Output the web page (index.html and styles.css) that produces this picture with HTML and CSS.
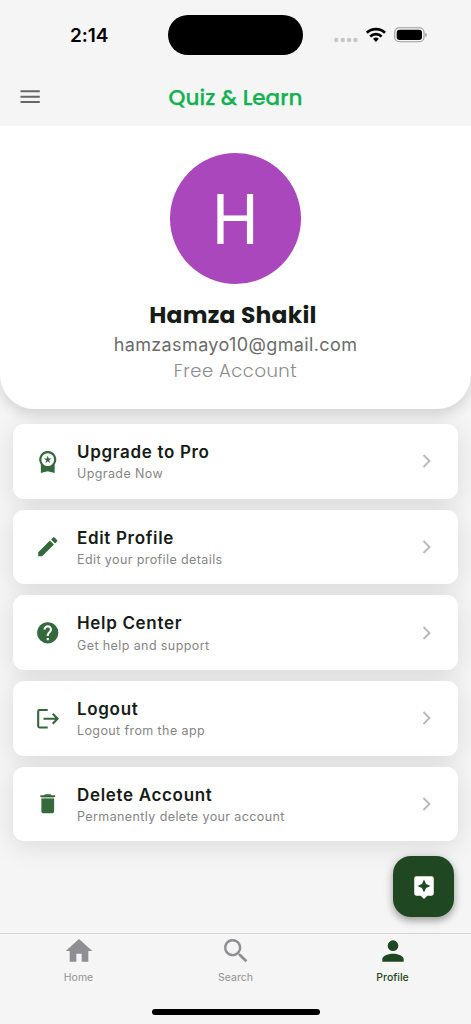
FILE: index.html
```html
<!DOCTYPE html>
<html lang="en">
<head>
<meta charset="utf-8">
<meta name="viewport" content="width=device-width, initial-scale=1">
<title>Quiz &amp; Learn</title>
<link rel="stylesheet" href="styles.css">
</head>
<body>
<div class="screen">
  <div class="status">
    <span class="time">2:14</span>
    <span class="island"></span>
    <svg class="indicators" width="96" height="20" viewBox="0 0 96 20">
      <g fill="#c6c6c6"><circle cx="4.2" cy="15" r="2.2"/><circle cx="10.7" cy="15" r="2.2"/><circle cx="17.2" cy="15" r="2.2"/><circle cx="23.4" cy="15" r="2.2"/></g>
      <g fill="none" stroke="#000" stroke-width="2.7"><path d="M34.8 7.8a13.2 13.2 0 0 1 18.2 0"/><path d="M38.2 11.4a8.3 8.3 0 0 1 11.4 0"/></g>
      <path d="M41 13.8a4.3 4.3 0 0 1 5.8 0L43.900 16.900z"/>
      <rect x="62.700" y="2.700" width="29.300" height="14" rx="4.500" fill="none" stroke="#999" stroke-width="1.100"/>
      <rect x="64.700" y="4.700" width="25.300" height="10.200" rx="2.900"/>
      <path d="M93.300 7.700c2 .7 2 3.700 0 4.400z" fill="#999"/>
    </svg>
  </div>
  <header class="topbar">
    <svg class="menu" width="20" height="14" viewBox="0 0 20 14"><path d="M.5 1.200h19.300M.5 6.700h19.300M.5 12h19.300" stroke="#666" stroke-width="1.900"/></svg>
    <h1 class="brand">Quiz &amp; Learn</h1>
  </header>
  <section class="account">
    <div class="avatar"><span>H</span></div>
    <h2 class="name">Hamza Shakil</h2>
    <p class="email">hamzasmayo10@gmail.com</p>
    <p class="plan">Free Account</p>
  </section>
  <main class="options">
    <a class="option">
      <svg class="icon" viewBox="0 0 24 24"><path fill-rule="evenodd" d="M12 1.900a8 8 0 0 0-6.500 12.700V22.500l6.500-1.600 6.500 1.600v-7.900A8 8 0 0 0 12 1.900zm0 2.100a6 6 0 1 1 0 12 6 6 0 0 1 0-12z"/><path d="m12 6.200.9 2.700h2.700l-2.200 1.700.8 2.700-2.200-1.700-2.200 1.700.8-2.700-2.200-1.700h2.700z"/></svg>
      <span class="copy"><strong>Upgrade to Pro</strong><small>Upgrade Now</small></span>
      <svg class="chevron" viewBox="0 0 10 14"><path d="m1.500 1 6 6-6 6"/></svg>
    </a>
    <a class="option">
      <svg class="icon" viewBox="0 0 24 24"><path d="M3 17.250V21h3.750L17.810 9.940l-3.750-3.750zM20.710 7.040a1 1 0 0 0 0-1.410l-2.340-2.340a1 1 0 0 0-1.410 0l-1.830 1.830 3.750 3.750z"/></svg>
      <span class="copy"><strong>Edit Profile</strong><small>Edit your profile details</small></span>
      <svg class="chevron" viewBox="0 0 10 14"><path d="m1.500 1 6 6-6 6"/></svg>
    </a>
    <a class="option">
      <svg class="icon" viewBox="0 0 24 24"><path d="M12 2a10 10 0 1 0 0 20 10 10 0 0 0 0-20zm1 17h-2v-2h2zm2.070-7.750-.9.920C13.450 12.900 13 13.500 13 15h-2v-.5c0-1.100.45-2.100 1.170-2.830l1.240-1.260A2 2 0 1 0 10 9H8a4 4 0 1 1 8 0c0 .88-.36 1.680-.93 2.250z"/></svg>
      <span class="copy"><strong>Help Center</strong><small>Get help and support</small></span>
      <svg class="chevron" viewBox="0 0 10 14"><path d="m1.500 1 6 6-6 6"/></svg>
    </a>
    <a class="option">
      <svg class="icon line" viewBox="0 0 24 24"><path d="M12 3.800H4.300q-1.300 0-1.300 1.300v13.800q0 1.300 1.300 1.300H12M8 12h13M16.700 7.400l4.500 4.600-4.500 4.600"/></svg>
      <span class="copy"><strong>Logout</strong><small>Logout from the app</small></span>
      <svg class="chevron" viewBox="0 0 10 14"><path d="m1.500 1 6 6-6 6"/></svg>
    </a>
    <a class="option">
      <svg class="icon" viewBox="0 0 24 24"><path d="M6 19c0 1.100.9 2 2 2h8c1.100 0 2-.9 2-2V7H6z"/><path d="M19 4h-3.500l-1-1h-5l-1 1H5v1.700h14z"/><path opacity=".45" d="M6 5.700h12V7H6z"/></svg>
      <span class="copy"><strong>Delete Account</strong><small>Permanently delete your account</small></span>
      <svg class="chevron" viewBox="0 0 10 14"><path d="m1.500 1 6 6-6 6"/></svg>
    </a>
  </main>
  <button class="fab" aria-label="Assistant">
    <svg width="26" height="26" viewBox="0 0 24 24"><path fill="#fff" fill-rule="evenodd" d="M19 2H5a2 2 0 0 0-2 2v14c0 1.100.9 2 2 2h4l3 3 3-3h4a2 2 0 0 0 2-2V4a2 2 0 0 0-2-2zm-5.120 10.880L12 17l-1.880-4.120L6 11l4.120-1.880L12 5l1.880 4.120L18 11z"/></svg>
  </button>
  <nav class="tabs">
    <a class="tab"><svg width="32" height="32" viewBox="0 0 24 24"><path d="M10 20v-6h4v6h5v-8h3L12 3 2 12h3v8z"/></svg><span>Home</span></a>
    <a class="tab"><svg width="32" height="32" viewBox="0 0 24 24"><path d="M15.500 14h-.79l-.28-.27A6.500 6.500 0 1 0 13.730 14.430l.27.28v.79l5 4.990L20.490 19zm-6 0.200a4.700 4.700 0 1 1 0-9.400 4.700 4.700 0 0 1 0 9.400z"/></svg><span>Search</span></a>
    <a class="tab active"><svg width="32" height="32" viewBox="0 0 24 24"><path d="M12 12a4 4 0 1 0 0-8 4 4 0 0 0 0 8zm0 2c-2.670 0-8 1.340-8 4v2h16v-2c0-2.660-5.330-4-8-4z"/></svg><span>Profile</span></a>
  </nav>
  <div class="home-bar"></div>
</div>
</body>
</html>
```
FILE: styles.css
```css
* { box-sizing: border-box; }
body { margin: 0; font-family: Inter, "Liberation Sans", sans-serif; background: #f5f5f5; }
h1, h2, p { margin: 0; }
.screen { position: relative; width: 471px; height: 1024px; display: flex; flex-direction: column; background: #f5f5f5; overflow: hidden; }

.status { height: 69px; padding-top: 15px; display: grid; grid-template-columns: 168px 135px 1fr; align-items: start; flex: none; }
.time { padding: 9px 0 0 70px; font-size: 19px; line-height: 24px; font-weight: 600; letter-spacing: -.1px; }
.island { height: 40px; border-radius: 20px; background: #000; }
.indicators { margin: 10px 0 0 29px; }

.topbar { position: relative; z-index: 1; height: 57px; display: grid; grid-template-columns: 40px 1fr 40px; align-items: center; padding: 0 20px 1px; flex: none; background: #f5f5f5; }
.menu { display: block; }
.brand { padding-top: 2px; text-align: center; white-space: nowrap; font-family: Poppins, Inter, sans-serif; font-size: 21.500px; line-height: 30px; font-weight: 500; color: #12b250; -webkit-text-stroke: .25px #12b250; }

.account { height: 283px; flex: none; padding-top: 27px; display: flex; flex-direction: column; align-items: center; background: #fff; border-radius: 0 0 34px 34px; box-shadow: 0 5px 13px rgba(0,0,0,.15); }
.avatar { width: 131px; height: 131px; padding-top: 3px; border-radius: 50%; background: #aa47bc; color: #fff; display: flex; align-items: center; justify-content: center; font: 400 71px/72px Roboto, sans-serif; }
.avatar span { transform: scaleX(.92); }
.name { margin-top: 15px; padding-right: 5px; font-family: Poppins, Inter, sans-serif; font-size: 23.400px; line-height: 32px; font-weight: 700; letter-spacing: .25px; color: #161c17; }
.email { margin-top: 1px; font-size: 18px; line-height: 26px; letter-spacing: .38px; color: #6b6b6b; }
.plan { font-family: Poppins, Inter, sans-serif; font-size: 18px; line-height: 26px; font-weight: 300; letter-spacing: .5px; color: #8c8c8c; }

.options { padding: 15px 13px 0; display: flex; flex-direction: column; gap: 11px; }
.option { height: 74.700px; flex: none; padding: 0 26px 0 21.500px; display: flex; align-items: center; background: #fff; border-radius: 11px; box-shadow: 0 5px 27px rgba(0,0,0,.11); }
.icon { width: 25.500px; height: 25.500px; flex: none; fill: #34693b; }
.line { fill: none; stroke: #34693b; stroke-width: 2; }
.copy { flex: 1; margin-left: 17px; padding-top: 2.600px; display: flex; flex-direction: column; }
.copy strong { font-size: 17px; line-height: 22px; font-weight: 600; letter-spacing: .67px; color: #161c17; }
.copy small { font-size: 12.500px; line-height: 20px; letter-spacing: .4px; color: #858585; margin-top: 1.300px; }
.chevron { width: 10px; height: 14px; fill: none; stroke: #b8b8b8; stroke-width: 1.800; }

.fab { position: absolute; left: 393px; top: 856px; width: 61px; height: 61px; padding: 0; border: 0; border-radius: 18px; display: flex; align-items: center; justify-content: center; background: #1f4722; box-shadow: 0 4px 7px rgba(0,0,0,.28), 0 1px 12px rgba(0,0,0,.13); }

.tabs { margin-top: auto; height: 76px; flex: none; border-top: 1px solid #d4d4d4; display: grid; grid-template-columns: repeat(3, 1fr); }
.tab { padding-top: 1px; display: flex; flex-direction: column; align-items: center; fill: #8f8e93; color: #929292; font-size: 10.500px; line-height: 14px; }
.tab span { margin-top: 4px; }
.active { fill: #1f4722; color: #1f4722; }
.active span { font-weight: 500; }
.home-bar { width: 168px; height: 6px; border-radius: 3px; background: #000; align-self: center; margin: 0 0 9px; flex: none; }
```
